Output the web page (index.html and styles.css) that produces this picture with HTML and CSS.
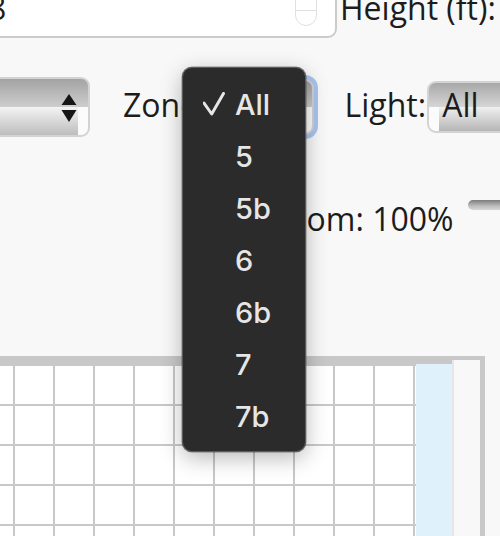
FILE: index.html
```html
<!DOCTYPE html>
<html>
<head>
<meta charset="utf-8">
<link rel="stylesheet" href="styles.css">
</head>
<body>
<div class="row row-top">
  <div class="num-input">
    <span class="val">8</span>
    <div class="spinner"><span class="half"></span><span class="half low"></span></div>
  </div>
  <span class="label label-top">Height (ft):</span>
  <div class="num-input2"></div>
</div>

<div class="row row-filters">
  <div class="sel sel-left">
    <svg class="arrows" width="16" height="28" viewBox="0 0 16 28"><polygon points="8,0 15.5,11 0.5,11" fill="#161616"/><polygon points="0.5,16 15.5,16 8,28" fill="#161616"/></svg>
  </div>
  <span class="label label-mid">Zone:</span>
  <div class="sel sel-zone"><span class="sel-text">All</span></div>
  <span class="label label-mid label-light">Light:</span>
  <div class="sel sel-light"><span class="sel-text">All</span></div>
</div>

<div class="row row-zoom">
  <span class="label label-zoom">Zoom: 100%</span>
  <div class="slider"></div>
</div>

<div class="board">
  <div class="grid"></div>
  <div class="lane"></div>
  <div class="side"></div>
</div>

<div class="menu">
  <div class="item"><svg class="chk" width="22" height="24" viewBox="0 0 22 24"><polyline points="1,11 8.7,22 20.5,1.5" fill="none" stroke="#e6e6e6" stroke-width="3" stroke-linecap="round" stroke-linejoin="round"/></svg><span class="txt">All</span></div>
  <div class="item"><span class="chk"></span><span class="txt">5</span></div>
  <div class="item"><span class="chk"></span><span class="txt">5b</span></div>
  <div class="item"><span class="chk"></span><span class="txt">6</span></div>
  <div class="item"><span class="chk"></span><span class="txt">6b</span></div>
  <div class="item"><span class="chk"></span><span class="txt">7</span></div>
  <div class="item"><span class="chk"></span><span class="txt">7b</span></div>
</div>
</body>
</html>
```
FILE: styles.css
```css
html, body {
  margin: 0;
  padding: 0;
  overflow: hidden;
  height: 536px;
  background: #f8f8f8;
}
body {
  font-family: "Open Sans", "Noto Sans", sans-serif;
  font-size: 32px;
  color: #1c1c1c;
  position: relative;
}
.row {
  display: flex;
  align-items: flex-start;
  white-space: nowrap;
}
.label {
  line-height: 40px;
  flex: none;
}

/* row 1 */
.row-top {
  margin-top: -30px;
  height: 68px;
}
.num-input {
  flex: none;
  box-sizing: border-box;
  margin-left: -100px;
  width: 437px;
  height: 68px;
  background: #fff;
  border: 2px solid #cbcbcb;
  border-radius: 0 0 9px 0;
  display: flex;
  align-items: flex-start;
}
.val {
  margin-left: 86px;
  margin-top: 15.6px;
  line-height: 40px;
}
.spinner {
  margin-left: auto;
  margin-right: 18px;
  margin-top: 22px;
  width: 22px;
  height: 32px;
  box-sizing: border-box;
  border: 1.5px solid #e0e0e0;
  border-radius: 0 0 11px 11px;
  display: flex;
  flex-direction: column;
}
.half { flex: 1; }
.half.low { border-top: 1.5px solid #e0e0e0; }
.label-top {
  margin-left: 3px;
  margin-top: 17.6px;
}
.num-input2 {
  flex: none;
  margin-left: 4px;
  box-sizing: border-box;
  width: 100px;
  height: 65px;
  background: #fff;
  border: 2px solid #cbcbcb;
  border-radius: 0 0 0 9px;
}

/* row 2 */
.row-filters {
  margin-top: 34px;
  height: 70px;
}
.sel {
  flex: none;
  box-sizing: border-box;
  border: 2px solid #d3d3d3;
  border-radius: 9px;
}
.sel-left {
  margin-left: -60px;
  margin-top: 5px;
  width: 150px;
  height: 60px;
  background:
    linear-gradient(#a3a3a3, #cdcdcd) top / 100% 50% no-repeat,
    linear-gradient(#f4f4f4, #bdbdbd) bottom left / calc(100% - 10px) 50% no-repeat,
    #fbfbfb;
  display: flex;
  align-items: center;
  justify-content: flex-end;
}
.arrows {
  margin-right: 11px;
  margin-top: 2px;
}
.label-mid {
  margin-top: 12.6px;
  margin-left: 33px;
}
.sel-zone {
  margin-left: 6px;
  margin-top: 7px;
  width: 101px;
  height: 56px;
  box-shadow: 0 0 0 4px #a9c5ef;
  background:
    linear-gradient(#9f9f9f, #cbcbcb) top / 100% 50% no-repeat,
    linear-gradient(#efefef, #b8b8b8) bottom left / calc(100% - 8px) 50% no-repeat,
    #fbfbfb;
}
.sel-text {
  display: block;
  line-height: 44px;
  padding-left: 13px;
}
.label-light {
  margin-left: 31px;
}
.sel-light {
  margin-left: 1px;
  margin-top: 9px;
  width: 140px;
  height: 52px;
  background:
    linear-gradient(#a8a8a8, #d6d6d6) top / 100% 50% no-repeat,
    linear-gradient(#f0f0f0, #b6b6b6) bottom right / calc(100% - 10px) 50% no-repeat,
    #fbfbfb;
}

/* row 3 */
.row-zoom {
  margin-top: 48px;
  height: 50px;
}
.label-zoom {
  margin-left: 269px;
  margin-top: 8.6px;
}
.slider {
  flex: none;
  margin-left: 14px;
  margin-top: 10px;
  width: 80px;
  height: 10px;
  border-radius: 5px;
  background: linear-gradient(#7c7c7c, #bdbdbd 60%, #d6d6d6);
}

/* board */
.board {
  margin-top: 116px;
  margin-left: -26px;
  width: 511px;
  height: 200px;
  box-sizing: border-box;
  border-top: 8px solid #c8c8c8;
  border-right: 5px solid #c8c8c8;
  display: flex;
}
.grid {
  width: 442px;
  flex: none;
  background-color: #fff;
  background-image:
    linear-gradient(to right, #c8c8c8 2px, transparent 2px),
    linear-gradient(to bottom, #c8c8c8 2px, transparent 2px);
  background-size: 40px 40px;
  background-position: 39px 0, 0 0;
}
.lane {
  width: 36px;
  flex: none;
  background: #dff2fc;
}
.side {
  flex: 1;
  margin-top: -4px;
  border-left: 2px solid #e6e6e6;
  background: #f8f8f8;
}

/* popup menu */
.menu {
  position: absolute;
  left: 182px;
  top: 67px;
  width: 124px;
  height: 385px;
  box-sizing: border-box;
  padding-top: 10.5px;
  background: #2b2b2b;
  border: 1px solid #5c5c5c;
  border-radius: 10px;
  box-shadow: 0 6px 22px rgba(0, 0, 0, 0.28), 0 0 0 0.5px rgba(0, 0, 0, 0.4);
  font-family: Inter, "Liberation Sans", sans-serif;
  font-size: 29px;
  font-weight: 500;
  color: #e6e6e6;
}
.item {
  display: flex;
  align-items: flex-start;
  height: 52px;
  padding-left: 20px;
}
.chk {
  flex: none;
  width: 22px;
  height: 24px;
  margin-top: 13.5px;
  margin-right: 10px;
}
.txt {
  line-height: 52px;
}
```
